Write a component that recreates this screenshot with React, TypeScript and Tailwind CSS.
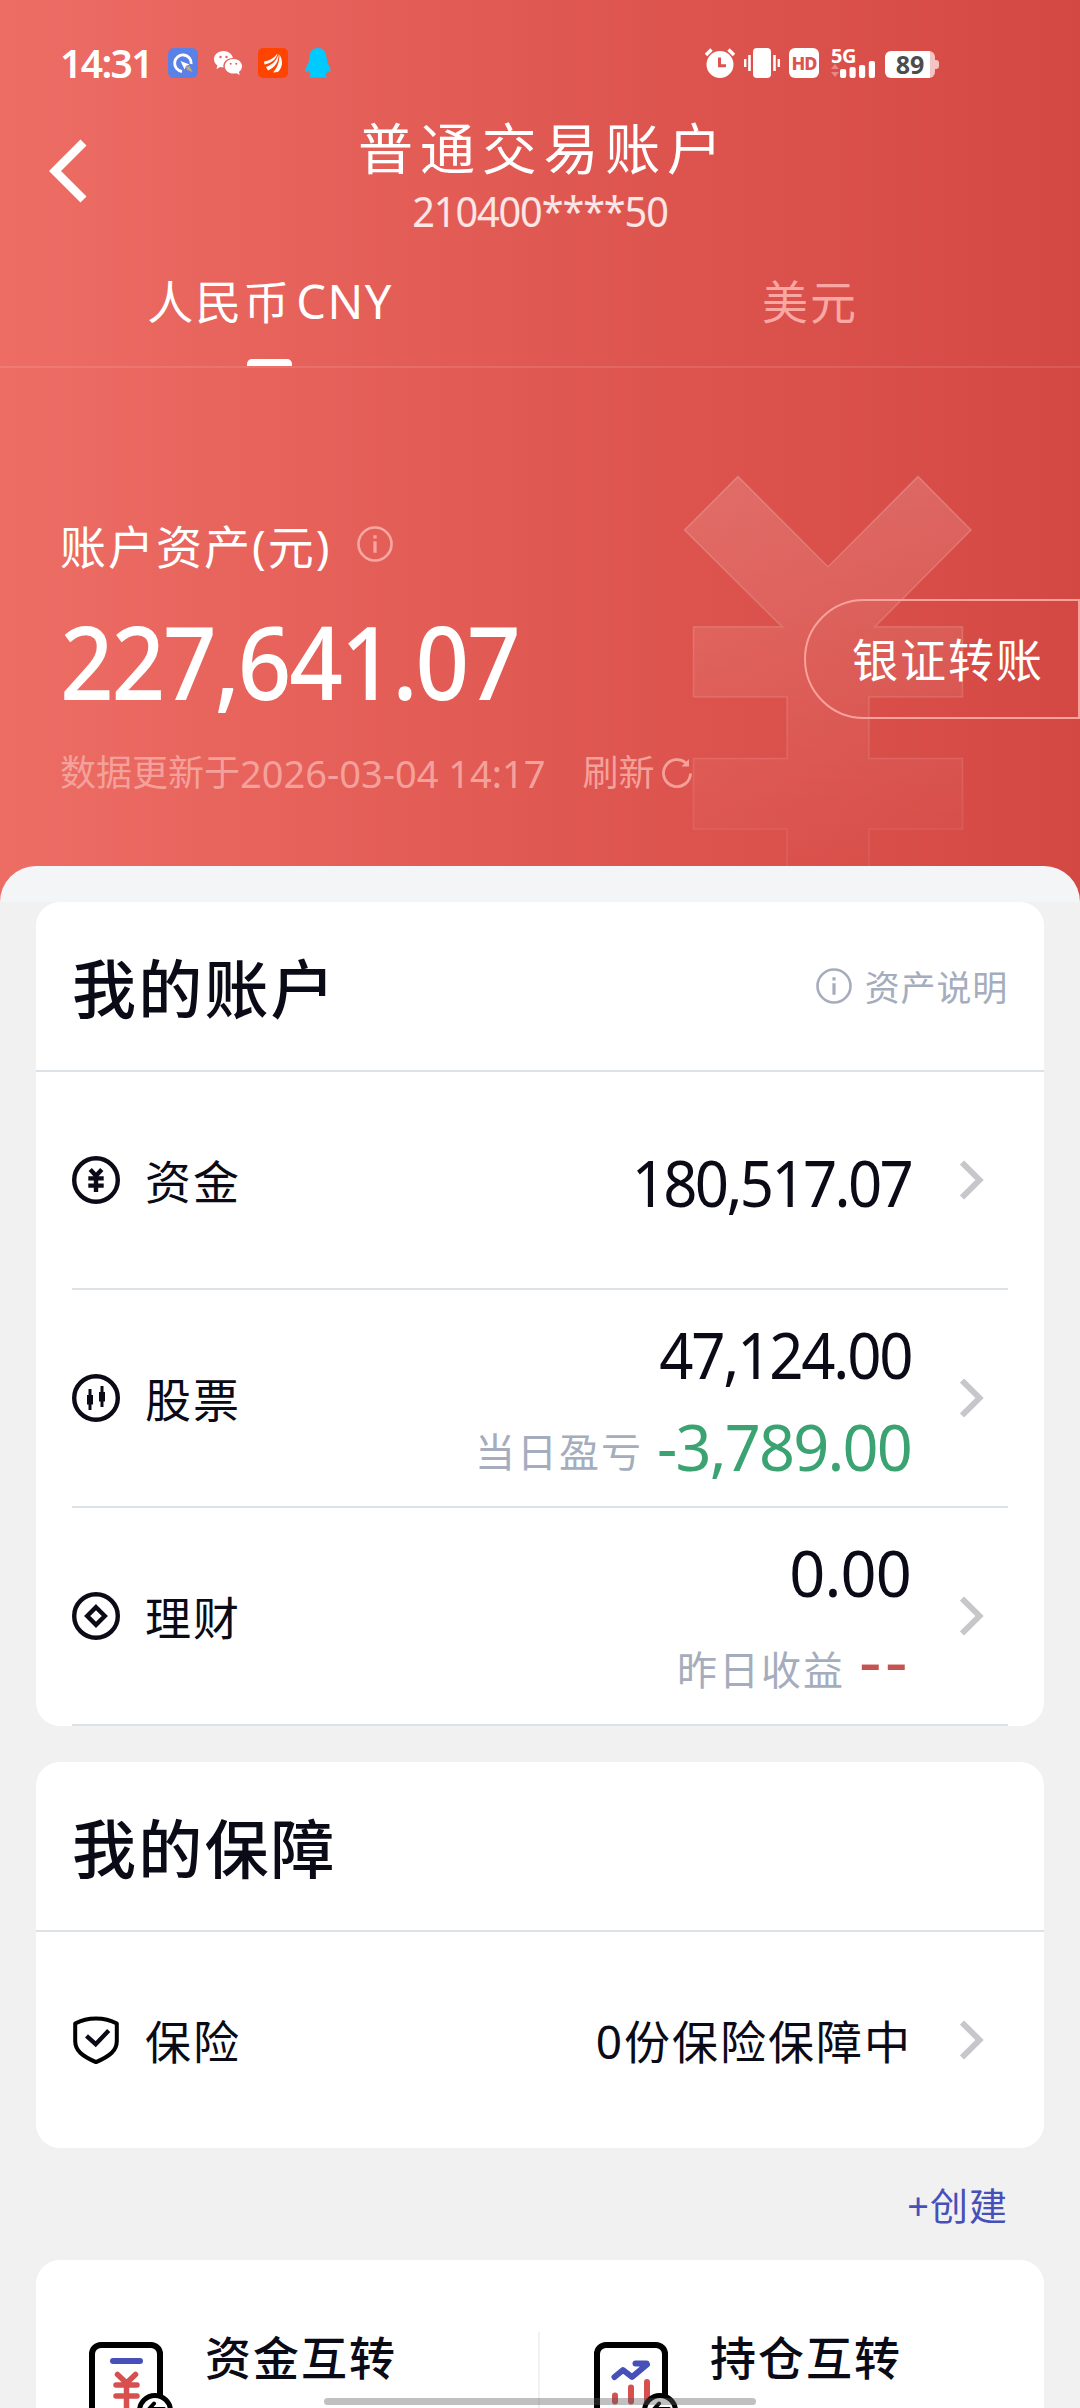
import type { ReactNode } from 'react';
import { clsx } from 'clsx';

type AccountRow = {
  id: string;
  label: string;
  icon: ReactNode;
  value: string;
  valueClass: string;
  subLabel?: string;
  subValue?: string;
  subClass?: string;
};

function InfoIcon({ className }: { className?: string }) {
  return (
    <svg viewBox="0 0 36 36" className={clsx('size-9 shrink-0', className)} fill="none" stroke="currentColor">
      <circle cx="18" cy="18" r="16.5" strokeWidth="2.6" />
      <path d="M18 9.3v3.2M18 15.2v11.6" strokeWidth="3.2" />
    </svg>
  );
}

function Chevron() {
  return (
    <svg viewBox="0 0 24 40" className="w-6 h-10 shrink-0" fill="none" stroke="#c7c7cb" strokeWidth="6">
      <path d="M2 2.5 19.5 20 2 37.5" />
    </svg>
  );
}

function FundIcon() {
  return (
    <svg viewBox="0 0 48 48" className="size-12" fill="none" stroke="#0a0b17">
      <circle cx="24" cy="24" r="21.8" strokeWidth="4.4" />
      <path d="M18.2 13.5 24 19.8l5.8-6.3M24 18.5V36M16.3 22.4h15.4M16.3 29.6h15.4" strokeWidth="4.4" />
    </svg>
  );
}

function StockIcon() {
  return (
    <svg viewBox="0 0 48 48" className="size-12" fill="none" stroke="#0a0b17">
      <circle cx="24" cy="24" r="21.8" strokeWidth="4.4" />
      <path d="M18 15v21M30 12v21" strokeWidth="3" />
      <path d="M18 21v9.5M30 18v9.5" strokeWidth="6" />
    </svg>
  );
}

function WealthIcon() {
  return (
    <svg viewBox="0 0 48 48" className="size-12" fill="none" stroke="#0a0b17" strokeWidth="4.4">
      <circle cx="24" cy="24" r="21.8" />
      <path d="m24 15.2 8.8 8.8-8.8 8.8-8.8-8.8z" />
    </svg>
  );
}

function ShieldIcon() {
  return (
    <svg viewBox="0 0 48 48" className="size-12" fill="none" stroke="#0a0b17">
      <path d="M3.2 7.4C15.5.8 32.5.8 44.8 7.4V25c0 9.5-6.5 14.8-20.8 21.2C9.7 39.8 3.2 34.5 3.2 25z" strokeWidth="4" stroke="#000" strokeLinejoin="round" />
      <path d="m14.5 19.8 9.2 8.4 13-13.6" strokeWidth="4.4" />
    </svg>
  );
}

const accounts: AccountRow[] = [
  {
    id: 'fund',
    label: '资金',
    icon: <FundIcon />,
    value: '180,517.07',
    valueClass: 'tracking-[-2.8px] scale-x-[.95] origin-right',
  },
  {
    id: 'stock',
    label: '股票',
    icon: <StockIcon />,
    value: '47,124.00',
    valueClass: 'tracking-[-2.3px] scale-x-[.95] origin-right',
    subLabel: '当日盈亏',
    subValue: '-3,789.00',
    subClass: 'text-[#3ba272] tracking-[-1.8px]',
  },
  {
    id: 'wealth',
    label: '理财',
    icon: <WealthIcon />,
    value: '0.00',
    valueClass: 'tracking-[-0.8px]',
    subLabel: '昨日收益',
    subValue: '--',
    subClass: '-mt-[12px] text-[#c55450] text-[70px] tracking-[3.5px]',
  },
];

function StatusBar() {
  return (
    <div className="h-[104px] pt-[22px] pl-[60px] pr-[141px] flex items-center justify-between">
      <div className="flex items-center">
        <span className="w-[108px] text-[39px] leading-[40px] font-semibold tracking-[-1.6px]">14:31</span>
        <svg viewBox="0 0 30 30" className="size-[30px]">
          <rect width="30" height="30" rx="6" fill="#5a82e6" />
          <path d="M14 23.5A8.3 8.3 0 1 1 23.2 16" fill="none" stroke="#fff" strokeWidth="2.8" />
          <path d="m12.5 13 9 3.5-3.5 1.5-1.5 3.5z" fill="#fff" />
          <path d="m17.5 19 4-1 3 6-5-2z" fill="#c9a678" />
        </svg>
        <svg viewBox="0 0 30 26" className="w-[30px] h-[26px] ml-[15px]" fill="#fff">
          <path d="M10.5 1C4.9 1 1 4.7 1 9.2c0 2.5 1.3 4.7 3.4 6.2L3.5 19l3.8-2c1 .3 2 .4 3.1.4C9.6 12 14 8 20 8 19 4 15.2 1 10.5 1z" />
          <path d="M20.5 9c-5 0-8.7 3.2-8.7 7.3s3.7 7.3 8.7 7.3c1 0 2-.2 3-.4l3.2 1.8-.8-3c1.9-1.3 3.1-3.4 3.1-5.7C29 12.2 25.4 9 20.5 9z" />
          <g fill="#e5625c">
            <circle cx="7.5" cy="7" r="1.2" />
            <circle cx="13.5" cy="7" r="1.2" />
            <circle cx="17.7" cy="13.8" r="1" />
            <circle cx="23.2" cy="13.8" r="1" />
          </g>
        </svg>
        <svg viewBox="0 0 30 30" className="size-[30px] ml-[15px]">
          <rect width="30" height="30" rx="5" fill="#ff4400" />
          <path d="M6 13.5C12 12.5 16 10 19.5 5.5 18.5 11 14 15 6.5 16.5zM8 19c6-2 10.5-6 12.5-13C21 13.5 17 19.5 10 22.5zM15 24.500c4-4.500 6.500-10 6.500-18C25.500 13 24.500 19.500 20 24z" fill="#fff" />
        </svg>
        <svg viewBox="0 0 26 30" className="w-[26px] h-[30px] ml-[17px]" fill="#00caff">
          <path d="M13 0C7.5 0 4.5 4 4.5 9.5L3.5 15C1.5 18 0 21 .6 24c.8.6 2-1 2.8-2 .3 1.8 1 3.2 2.3 4.5L4 29.5h18L20.3 26.5c1.3-1.3 2-2.7 2.3-4.5.8 1 2 2.6 2.8 2C26 21 24.5 18 22.5 15l-1-5.5C21.5 4 18.5 0 13 0z" />
        </svg>
      </div>

      <div className="flex items-center">
        <svg viewBox="0 0 30 30" className="size-[30px]">
          <circle cx="15" cy="16.5" r="13.5" fill="#fff" />
          <path d="m1 7 5.5-5.5M29 7l-5.5-5.5" stroke="#fff" strokeWidth="3.5" />
          <path d="M14.5 9.5v8.3H21" fill="none" stroke="#dc544f" strokeWidth="3" />
        </svg>
        <svg viewBox="0 0 36 30" className="w-9 h-[30px] ml-[9px]" fill="#fff">
          <rect x="9" width="18" height="30" rx="4" />
          <path d="M4.2 7h2.6v16H4.2zM0 11h2.4v8H0zM29.2 7h2.6v16h-2.6zM33.6 11H36v8h-2.4z" />
        </svg>
        <div className="ml-[9px] size-[30px] rounded-[6px] bg-white text-[#dc544f] text-[18px] leading-[30px] font-extrabold text-center tracking-[-1px]">HD</div>
        <div className="ml-[12px] w-11 h-[30px] relative">
          <span className="absolute left-0 -top-[2px] text-[20px] leading-[19px] font-bold tracking-[-0.5px]">5G</span>
          <svg viewBox="0 0 44 30" className="absolute inset-0" fill="#fff">
            <rect x="9" y="21" width="6.2" height="9" rx="2" />
            <rect x="18.5" y="19" width="6.2" height="11" rx="2" />
            <rect x="28" y="17" width="6.2" height="13" rx="2" />
            <rect x="37.8" y="13" width="6.2" height="17" rx="2" />
            <path d="M0 21h8l-4-5zM0 24h8l-4 5z" fill="#e98883" />
          </svg>
        </div>
        <div className="ml-[10px] mt-[3px] flex items-center">
          <div className="w-[50px] h-[27px] rounded-[6px] bg-linear-to-r from-white from-90% to-[#f5c4c2] to-90% text-[#4c4c4c] text-[25px] leading-[27px] font-bold text-center">89</div>
          <div className="w-[4px] h-[9px] rounded-r-[3px] bg-[#f5c4c2]"></div>
        </div>
      </div>
    </div>
  );
}

// Large currency mark sitting behind the header content
function YenWatermark() {
  return (
    <svg viewBox="680 470 300 396" className="absolute left-[680px] top-[470px] w-[300px] h-[396px]">
      <defs>
        <linearGradient id="yenFill" x1="0" y1="0" x2="0" y2="1">
          <stop offset="0" stopColor="#fff" stopOpacity="0.15" />
          <stop offset="1" stopColor="#fff" stopOpacity="0" />
        </linearGradient>
        <linearGradient id="yenLine" x1="0" y1="0" x2="0" y2="1">
          <stop offset="0" stopColor="#fff" stopOpacity="0.2" />
          <stop offset="1" stopColor="#fff" stopOpacity="0.06" />
        </linearGradient>
      </defs>
      <path
        d="M738 476.5 828 566.7 918 476.5 971 530 875 626.7H962.5V697H869V758.5H962.5V829H869V880H787V829H693.5V758.5H787V697H693.5V626.7H782L684.5 530z"
        fill="url(#yenFill)"
        stroke="url(#yenLine)"
        strokeWidth="1.6"
      />
    </svg>
  );
}

function Header() {
  return (
    <header className="relative h-[902px] flex flex-col text-white bg-linear-to-r from-[#ed6d65] via-[#e05852] to-[#d44843]">
      <YenWatermark />
      <StatusBar />

      <nav className="h-[134px] grid grid-cols-[120px_1fr_120px]">
        <button className="flex items-center pl-[48px]" aria-label="返回">
          <svg viewBox="0 0 40 64" className="w-10 h-16" fill="none" stroke="#fff" strokeWidth="8.5">
            <path d="M35.5 3.5 7 32l28.5 28.5" />
          </svg>
        </button>
        <div className="pt-3 text-center">
          <h1 className="text-[55px] leading-[64px] tracking-[6.8px] pl-[7px]">普通交易账户</h1>
          <p className="mt-[6px] text-[42px] leading-[50px] text-white/85 tracking-[-1.2px] scale-x-[.945]">210400****50</p>
        </div>
      </nav>

      <div className="h-[130px] grid grid-cols-2 border-b-2 border-white/10 text-[46px] leading-[126px] text-center tracking-[2px]">
        <div className="relative">
          人民币<span className="ml-[5px] tracking-[1.5px] text-[47px]">CNY</span>
          <div className="absolute bottom-0 left-[247px] w-[45px] h-[7px] rounded-t-[5px] bg-white"></div>
        </div>
        <div className="text-[#f9a7a2]">美元</div>
      </div>

      <section className="relative flex items-start justify-between pl-[60px]">
        <div className="pt-[148px]">
          <div className="flex items-center gap-[25px] text-[46px] leading-[60px]">
            <span className="tracking-[2px]">账户资产(元)</span>
            <InfoIcon className="text-[#f9a7a2] -mt-[4px]" />
          </div>
          <div className="mt-[35px] text-[102px] leading-[100px] font-medium tracking-[-2.4px] scale-x-[.92] origin-left">227,641.07</div>
          <div className="mt-[37px] flex items-center text-[36px] leading-[50px] text-[#f5a19b]">
            <span>数据更新于</span>
            <span className="text-[38px]">2026-03-04 14:17</span>
            <button className="ml-[37px] flex items-center gap-[8px]">
              刷新
              <svg viewBox="0 0 30 30" className="size-[30px]" fill="none" stroke="currentColor" strokeWidth="2.8">
                <path d="M28.5 15.5A13.5 13.5 0 1 1 24.5 5.5" />
                <path d="M27 1v7.5h-7.5z" fill="currentColor" stroke="none" />
              </svg>
            </button>
          </div>
        </div>
        <button className="mt-[231px] w-[276px] h-[120px] rounded-l-full border-2 border-[#f9a19b] pl-[46px] text-left text-[46px] leading-[116px] tracking-[2px] whitespace-nowrap">
          银证转账
        </button>
      </section>

      <div className="relative mt-auto h-9 rounded-t-[36px] bg-[#f3f5f7]"></div>
    </header>
  );
}

function CardTitle({ title, children }: { title: string; children?: ReactNode }) {
  return (
    <div className="h-[170px] px-9 flex items-center justify-between border-b-2 border-[#dde2e6]">
      <h2 className="pt-[6px] text-[64px] leading-[80px] font-medium tracking-[2.2px]">{title}</h2>
      {children}
    </div>
  );
}

function RowLabel({ icon, label }: { icon: ReactNode; label: string }) {
  return (
    <div className="flex items-center gap-[25px]">
      {icon}
      <span className="text-[46px] leading-[60px] tracking-[2px] pt-[2px]">{label}</span>
    </div>
  );
}

function AccountCard() {
  return (
    <section className="h-[824px] rounded-[24px] bg-white">
      <CardTitle title="我的账户">
        <div className="flex items-center gap-[13px] text-[#a5adbd] text-[35px] leading-[40px]">
          <InfoIcon />
          <span className="tracking-[0.8px] pt-[4px]">资产说明</span>
        </div>
      </CardTitle>
      <ul className="px-9">
        {accounts.map((row) => (
          <li key={row.id} className="h-[218px] pr-[24px] flex items-center border-b-2 border-[#dde2e6]">
            <RowLabel icon={row.icon} label={row.label} />
            <div className="ml-auto mr-[49px] pt-[6px] flex flex-col items-end text-[63px] leading-[92px]">
              <span className={row.valueClass}>{row.value}</span>
              {row.subLabel && (
                <div className="h-[92px] flex items-center gap-[14px]">
                  <span className="pt-[10px] text-[40px] leading-[60px] tracking-[2px] text-[#a5adbd]">{row.subLabel}</span>
                  <span className={row.subClass}>{row.subValue}</span>
                </div>
              )}
            </div>
            <Chevron />
          </li>
        ))}
      </ul>
    </section>
  );
}

function InsuranceCard() {
  return (
    <section className="mt-9 h-[386px] rounded-[24px] bg-white">
      <CardTitle title="我的保障" />
      <div className="h-[216px] pl-9 pr-[60px] flex items-center">
        <RowLabel icon={<ShieldIcon />} label="保险" />
        <span className="ml-auto mr-[48px] pt-[2px] text-[46px] leading-[60px] tracking-[2px]">0份保险保障中</span>
        <Chevron />
      </div>
    </section>
  );
}

// Phone outline with a transfer badge, shared by both shortcuts
function TransferIcon({ children }: { children: ReactNode }) {
  return (
    <svg viewBox="0 0 90 90" className="size-[90px]" fill="none" strokeLinecap="round" strokeLinejoin="round">
      <rect x="3" y="3" width="68" height="84" rx="9" stroke="#000" strokeWidth="6" />
      {children}
      <circle cx="66" cy="69" r="15.5" fill="#fff" stroke="#000" strokeWidth="5" />
      <path d="M75 67H60l5-5.5" stroke="#000" strokeWidth="4" />
    </svg>
  );
}

function Shortcuts() {
  return (
    <section className="h-[300px] pt-[72px] grid grid-cols-2 rounded-t-[24px] bg-white text-[46px] leading-[50px] font-medium tracking-[2px]">
      <div className="h-[228px] pl-[53px] flex items-start border-r-2 border-[#f1f1f1]">
        <div className="pt-[10px]">
          <TransferIcon>
            <path d="M24 19h27" stroke="#4650b8" strokeWidth="6" />
            <path d="m28.5 32.5 9 8.5 9-8.5M37.5 42v26M27 43h21M27 54h21" stroke="#d65050" strokeWidth="5.5" />
          </TransferIcon>
        </div>
        <span className="ml-[26px]">资金互转</span>
      </div>
      <div className="h-[228px] pl-[54px] flex items-start">
        <div className="pt-[10px]">
          <TransferIcon>
            <path d="m20.5 35 8.5-7 9 7 15-12.500M41.500 21.500h11" stroke="#4650b8" strokeWidth="6" />
            <path d="M21 53.5v6M37 45.5v14M53 40v19" stroke="#d65050" strokeWidth="6" />
          </TransferIcon>
        </div>
        <span className="ml-[26px]">持仓互转</span>
      </div>
    </section>
  );
}

export default function App() {
  return (
    <div className="relative w-[1080px] h-[2408px] overflow-hidden bg-[#f1f1f1] text-[#0a0b17] font-['Noto_Sans','Noto_Sans_CJK_SC',sans-serif]">
      <Header />
      <main className="px-9">
        <AccountCard />
        <InsuranceCard />
        <div className="h-[112px] pr-[36px] text-right text-[38px] leading-[114px] tracking-[1px] text-[#4650b8]">+创建</div>
        <Shortcuts />
      </main>
      <div className="absolute bottom-[3px] left-[324px] w-[432px] h-[7px] rounded-full bg-[#5a5a5a]/38"></div>
    </div>
  );
}
